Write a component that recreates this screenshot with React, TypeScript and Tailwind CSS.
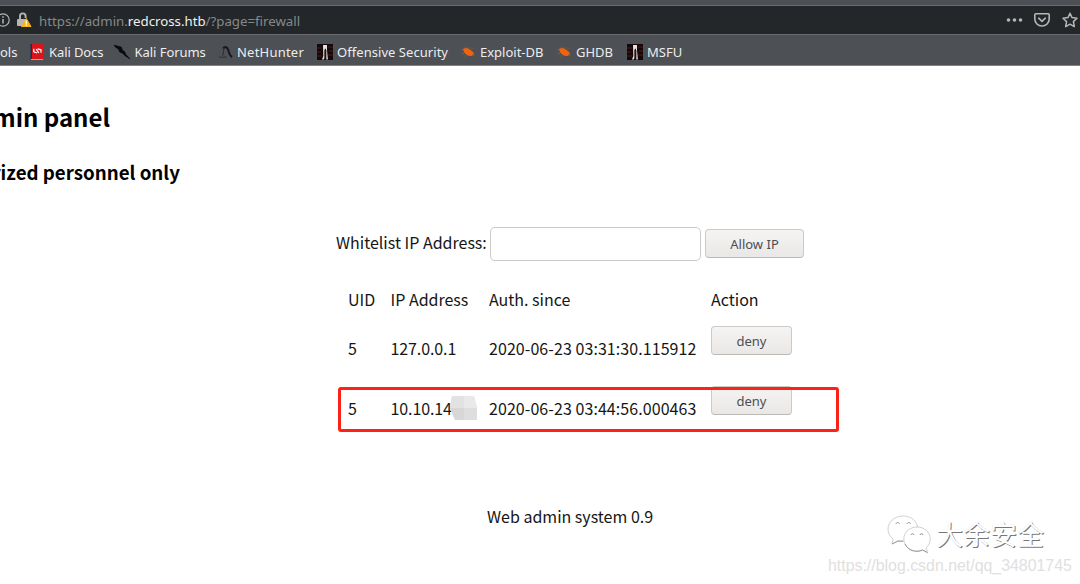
import React from "react";

const ui = "font-['Noto_Sans','Open_Sans',sans-serif]";
const body = "font-['Noto_Sans_CJK_SC','Noto_Sans',sans-serif]";

function DocsIcon() {
  return (
    <svg className="h-4 w-[14px]" viewBox="0 0 14 16">
      <rect x="0.5" width="3" height="15.5" fill="#1f2b50" />
      <rect x="2" width="11" height="15" fill="#d9151b" />
      <path d="M1 15h12v1H1z" fill="#b9a8a8" />
      <path d="M3.8 4.8v3l3.4 1.2M11 8.8v-3L7.6 4.8M6.2 5.2l2.6 3.6" fill="none" stroke="#fff" strokeWidth="1.2" />
    </svg>
  );
}

function ForumsIcon() {
  return (
    <svg className="h-4 w-4" viewBox="0 0 16 16">
      <path d="M0 1l4 1.2L7.2 3l1.5 3.5 2 1.2 1 2.6L16 15l-5-3.3-2.4-2.5L5.7 8 4.5 5 1.8 3.4z" fill="#08090a" stroke="#08090a" strokeWidth=".6" />
    </svg>
  );
}

function NetHunterIcon() {
  return (
    <svg className="h-4 w-[14px]" viewBox="0 0 14 16">
      <path d="M4 4.5C6 2 8.500 3.200 9.300 6c.7 3 1.200 5.500 3.700 7.200" fill="none" stroke="#17191b" strokeWidth="2" />
      <path d="M4.800 4.500c-.8 3 .6 5-1.500 7.300M0 13c3 .6 5 .2 7.500 0" fill="none" stroke="#303235" strokeWidth="1.100" />
    </svg>
  );
}

function OffsecIcon() {
  return (
    <svg className="h-4 w-4" viewBox="0 0 16 16">
      <rect width="16" height="16" fill="#160709" />
      <path d="M0 4h5M0 8h4M0 12h5M11 3h5M12 7h4M11 11h5" stroke="#4a1c1e" strokeWidth="1.2" />
      <path d="M6 1h4v5l.9 9.500H9.200V6.500L8.400 4.500 7.600 6v8l-.8 1.500H5L6.300 12z" fill="#e4e1df" />
      <path d="M7.600 6l.8-1.500.8 2V15H7.600z" fill="#251214" />
    </svg>
  );
}

function ExploitIcon() {
  return (
    <svg className="h-4 w-[14px]" viewBox="0 0 14 16">
      <path d="M2.2 4.5 6 4l3 1.700L12 8l1 2-2.500 2-3.300-.2L4 9.500 2.500 7z" fill="#ee640f" />
      <path d="M5 4 4 2.600M8 5l.3-2M2.500 6.500 0 5.200M3.300 9 .5 10M5.500 11l-2 1.800M10 6l1.500-1.500M11.500 11l2 .8" stroke="#a3582f" strokeWidth=".8" />
    </svg>
  );
}

function Bookmark({ icon, label, box, gap }: { icon: React.ReactNode; label: string; box: string; gap: string }) {
  return (
    <div className={`flex shrink-0 items-center ${box} ${gap}`}>
      {icon}
      <span className="pt-[2px]">{label}</span>
    </div>
  );
}

function Browser() {
  return (
    <header className={`${ui} w-full`}>
      <div className="h-[6px] border-b border-[#686c6e] bg-[#4d5055]" />
      <div className="flex h-7 items-center bg-[#232729] text-[13.25px] text-[#85898b]">
        <svg className="h-4 w-[10px] shrink-0" viewBox="0 0 10 16" fill="none" stroke="#b4b6b7">
          <circle cx="3" cy="8" r="6.2" strokeWidth="1.2" />
          <path d="M3 7v4.5M3 4.2v1.5" strokeWidth="1.5" />
        </svg>
        <svg className="ml-[6px] h-4 w-4 shrink-0" viewBox="0 0 16 16">
          <path d="M4 8V4.2a2.8 2.8 0 0 1 5.6 0V6" fill="none" stroke="#b4b6b7" strokeWidth="1.9" />
          <rect x="1" y="7" width="9.5" height="7" rx="1" fill="#b4b6b7" />
          <path d="M10.3 6.5 15 14.5H5.5z" fill="#fbb416" stroke="#fbb416" strokeLinejoin="round" />
          <path d="M10.3 8.5v3.2M10.3 12.6v1.3" stroke="#fff" strokeWidth="1.3" />
        </svg>
        <span className="ml-[7px] pt-[3px] whitespace-nowrap">
          https://admin.<span className="text-[#f0f1f1]">redcross.htb</span>/?page=firewall
        </span>
        <svg className="ml-auto h-4 w-[18px] shrink-0" viewBox="0 0 18 16" fill="#b4b6b7">
          <circle cx="2.5" cy="8" r="1.8" /><circle cx="8.500" cy="8" r="1.8" /><circle cx="14.500" cy="8" r="1.8" />
        </svg>
        <svg className="ml-[10px] h-4 w-4 shrink-0" viewBox="0 0 16 16" fill="none" stroke="#b4b6b7" strokeWidth="1.6" strokeLinejoin="round" strokeLinecap="round">
          <path d="M1.8 1.8h12.4c.6 0 1 .4 1 1V7c0 4-3.2 7-7.2 7S.8 11 .8 7V2.8c0-.6.4-1 1-1z" />
          <path d="M4.7 6.2 8 9.3l3.3-3.1" />
        </svg>
        <svg className="ml-3 mr-[2px] h-4 w-4 shrink-0" viewBox="0 0 16 16" fill="none" stroke="#b4b6b7" strokeWidth="1.5" strokeLinejoin="round">
          <path d="M8 1.2 10 5.6l5 .6-3.6 3.4.9 5L8 12.2l-4.3 2.4.9-5L1 6.2l5-.6z" />
        </svg>
      </div>
      <nav className="flex h-8 items-center overflow-hidden border-b border-t border-b-[#808385] border-t-[#686c6e] bg-[#4d5055] pt-[4px] text-[13px] whitespace-nowrap text-[#ecedee]">
        <span className="w-[30px] shrink-0 pt-[2px]">ols</span>
        <Bookmark icon={<DocsIcon />} label="Kali Docs" box="w-[84px] tracking-[-0.1px]" gap="gap-[5px]" />
        <Bookmark icon={<ForumsIcon />} label="Kali Forums" box="w-[105px] tracking-[-0.05px]" gap="gap-[4.500px]" />
        <Bookmark icon={<NetHunterIcon />} label="NetHunter" box="w-[98px] tracking-[0.22px]" gap="gap-1" />
        <Bookmark icon={<OffsecIcon />} label="Offensive Security" box="w-[144px] tracking-[0.05px]" gap="gap-1" />
        <Bookmark icon={<ExploitIcon />} label="Exploit-DB" box="w-24" gap="gap-[5px]" />
        <Bookmark icon={<ExploitIcon />} label="GHDB" box="w-[70px]" gap="gap-[5px]" />
        <Bookmark icon={<OffsecIcon />} label="MSFU" box="w-20" gap="gap-1" />
      </nav>
    </header>
  );
}

function Button({ children, size }: { children: string; size: string }) {
  return (
    <button className={`${ui} ${size} rounded-[4px] border border-[#cdc9c5] border-b-[#bdb9b5] bg-linear-to-b from-[#f5f4f3] to-[#eae8e6] pt-px text-[13px] leading-[26px] text-[#4b4e50]`}>
      {children}
    </button>
  );
}

function Row({ uid, ip, since, masked }: { uid: string; ip: string; since: string; masked?: boolean }) {
  return (
    <div className="flex h-[60px] items-start">
      <span className="w-[42.5px] pt-[11px]">{uid}</span>
      <span className="flex w-[98.5px] pt-[11px] tracking-[-0.1px]">
        {ip}
        {masked && (
          <svg className="-ml-[2px] h-6 w-[27px]" viewBox="0 0 27 24">
            <path d="M2 0h22l3 12v12H5L0 12z" fill="#dedede" />
            <path d="M2 0h12v12H0z" fill="#e2e2e2" />
            <path d="M14 0h10l3 12H14z" fill="#e9e9e9" />
            <path d="M0 12h14v12H5z" fill="#d7d7d7" />
          </svg>
        )}
      </span>
      <span className="w-[222px] pt-[11px] tracking-[0.07px]">{since}</span>
      <div className="pt-px"><Button size="h-[29px] w-[81px]">deny</Button></div>
    </div>
  );
}

function Watermark() {
  return (
    <div className="absolute right-[6px] bottom-0 flex h-[73px] w-[246px] flex-col">
      <div className="flex h-[45px] items-center pl-[59px]">
        <svg className="h-[42px] w-[45px]" viewBox="0 0 45 42" fill="#fff" stroke="#c4c4c4" strokeWidth=".8">
          <path d="M16 3C7.5 3 1 9 1 16c0 4 2 7.500 5 10L5 31l6-3c2 .6 6 .8 8 .3C32 26 32 18 30 12 28 6 22 3 16 3z" />
          <path d="M30 14c-7.5 0-13.200 5.400-13.200 12S22.500 38 30 38c2 0 4-.4 5.500-1l5 2.600-1.300-5c2.500-2.200 4-5.100 4-8.600 0-6.600-5.700-12-13.200-12z" />
          <path d="M9 11c.5-2 3-2 3.500 0M20 11c.5-2 3-2 3.500 0M24 22c.5-1.800 2.500-1.800 3 0M33 22c.5-1.800 2.500-1.800 3 0" fill="none" stroke="#777" />
          <path d="M18 31C21 38 30 40 35.500 37l5 2.600M5 31l6-3h5" fill="none" stroke="#888" />
        </svg>
        <span className={`${body} ml-[4px] text-[27px] leading-[40px] whitespace-nowrap text-white [text-shadow:1px_1px_0.5px_#777,0_0_1px_#ddd]`}>大余安全</span>
      </div>
      <div className="font-['Liberation_Sans',Arial,sans-serif] text-[15.9px] leading-[20px] whitespace-nowrap text-[#e0e0e0]">
        https://blog.csdn.net/qq_34801745
      </div>
    </div>
  );
}

export default function App() {
  return (
    <div className="relative flex h-[584px] w-[1080px] flex-col overflow-hidden bg-white">
      <Browser />
      <main className={`${body} flex flex-col text-[16px] leading-6 whitespace-nowrap text-[#161616]`}>
        <h2 className="mt-[33px] flex h-[35px] w-[110px] justify-end text-[24px] leading-[35px] font-bold text-black">min panel</h2>
        <h3 className="mt-[23px] flex h-[30px] w-[180px] justify-end text-[18.72px] leading-[30px] font-bold text-black">rized personnel only</h3>
        <form className="mt-10 ml-[336px] flex h-[34px] items-center">
          <label className="w-[154px] pb-1" htmlFor="ip">Whitelist IP Address:</label>
          <input id="ip" className="h-[34px] w-[211px] rounded-[5px] border border-[#cdc9c6] bg-white" />
          <div className="ml-1 flex h-[34px] items-start pt-[2px]"><Button size="h-[29px] w-[99px]">Allow IP</Button></div>
        </form>
        <section className="relative ml-[348px] mt-[26px]">
          <div className="flex h-[38px]">
            <span className="w-[42.5px]">UID</span>
            <span className="w-[98.5px]">IP Address</span>
            <span className="w-[222px]">Auth. since</span>
            <span>Action</span>
          </div>
          <Row uid="5" ip="127.0.0.1" since="2020-06-23 03:31:30.115912" />
          <Row uid="5" ip="10.10.14" since="2020-06-23 03:44:56.000463" masked />
          <div className="absolute top-[100px] -left-[10px] h-[45px] w-[501px] rounded-[3px] border-[3px] border-[#fb2318]" />
        </section>
        <footer className="ml-[487px] mt-[59px]">Web admin system 0.9</footer>
      </main>
      <Watermark />
    </div>
  );
}
